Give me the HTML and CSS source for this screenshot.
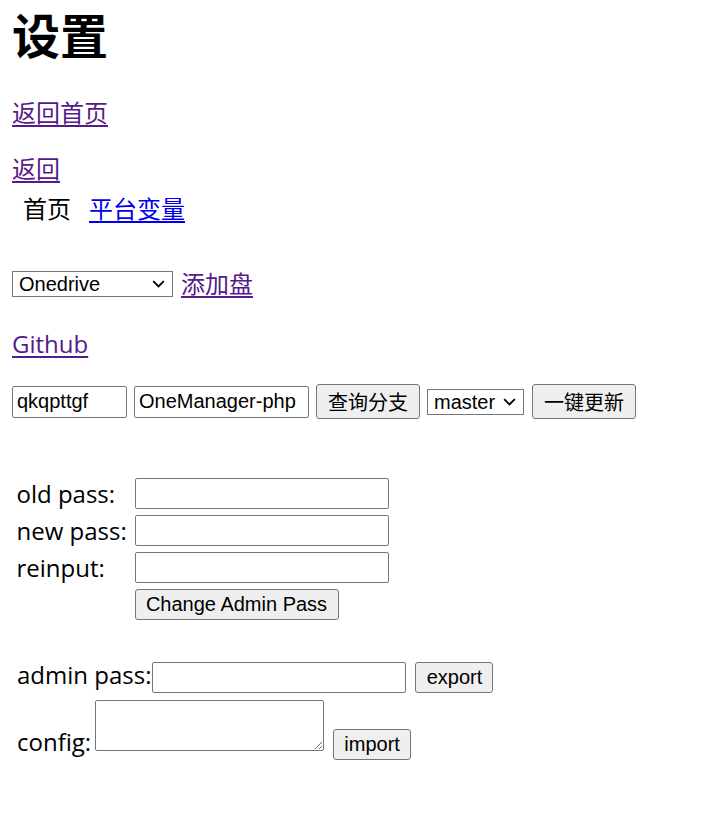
FILE: index.html
```html
<!DOCTYPE html>
<html lang="zh-CN">
<head>
<meta charset="utf-8">
<title>设置</title>
<link rel="stylesheet" href="styles.css">
</head>
<body>
<h1 class="title">设置</h1>
<div class="line back-home"><a class="visited" href="#">返回首页</a></div>
<div class="line back"><a class="visited" href="#">返回</a></div>
<div class="line tabs"><span class="tab">首页</span><a class="link" href="#">平台变量</a></div>
<div class="line drive-row"><select class="drive-select"><option>Onedrive</option></select><a class="visited add-drive" href="#">添加盘</a></div>
<div class="line github"><a class="visited" href="#">Github</a></div>
<div class="update-row"><input class="field owner" value="qkqpttgf"><input class="field repo" value="OneManager-php"><button class="btn tall">查询分支</button><select class="branch"><option>master</option></select><button class="btn tall">一键更新</button></div>
<table class="pass-table">
<tr><td class="label">old pass:</td><td><input class="field pass" type="password"></td></tr>
<tr><td class="label">new pass:</td><td><input class="field pass" type="password"></td></tr>
<tr><td class="label">reinput:</td><td><input class="field pass" type="password"></td></tr>
<tr><td class="label"></td><td><button class="btn change">Change Admin Pass</button></td></tr>
</table>
<div class="config">
<div class="config-row first"><span class="config-label">admin pass:</span><input class="field pass" type="password"><button class="btn small">export</button></div>
<div class="config-row second"><span class="config-label wide">config:</span><textarea class="config-area"></textarea><button class="btn small">import</button></div>
</div>
</body>
</html>
```
FILE: styles.css
```css
body {
  margin: 4px 12px 12px;
  font-family: "Open Sans", "Noto Sans CJK SC", sans-serif;
  font-size: 24px;
  line-height: 32px;
  color: #000;
  background: #fff;
}
a {
  text-decoration-thickness: 2px;
  text-underline-offset: 3px;
}
a.visited { color: #551a8b; }
a.link { color: #0000ee; }

.title {
  margin: 0;
  font-size: 48px;
  line-height: 64px;
  font-weight: bold;
}
.back-home { margin-top: 29px; }
.back { margin-top: 24px; }
.tabs {
  margin-top: 8px;
  display: flex;
  gap: 18px;
  padding-left: 11px;
}
.drive-row {
  margin-top: 43px;
  display: flex;
  align-items: center;
  gap: 8px;
}
.github { margin-top: 28px; }

input, select, button, textarea {
  font-family: "Liberation Sans", "Noto Sans CJK SC", sans-serif;
  font-size: 20px;
  color: #000;
  margin: 0;
  box-sizing: border-box;
}
.field {
  height: 31px;
  border: 1px solid #767676;
  border-radius: 2px;
  padding: 1px 4px;
  background: #fff;
}
select {
  -webkit-appearance: none;
  appearance: none;
  height: 26px;
  border: 1px solid #767676;
  border-radius: 0;
  padding: 0 24px 0 6px;
  background: #fff url("data:image/svg+xml,%3Csvg xmlns='http://www.w3.org/2000/svg' viewBox='0 0 13 8'%3E%3Cpath d='M1.2 1.2l5.3 5.3 5.3-5.3' fill='none' stroke='%23000' stroke-width='1.9'/%3E%3C/svg%3E") no-repeat right 7px center / 13px 8px;
}
.btn {
  height: 31px;
  border: 1px solid #767676;
  border-radius: 3px;
  background: #efefef;
  padding: 0 10px;
}
.btn.tall { height: 35px; padding: 0 11px; }

.update-row {
  margin-top: 24px;
  display: flex;
  align-items: center;
  gap: 7px;
}
.owner { width: 115px; height: 32px; }
.repo { width: 175px; height: 32px; }
.drive-select { width: 161px; }
.branch { width: 97px; }
.update-row .branch + .btn { margin-left: 1px; }

.pass-table {
  margin-top: 54.5px;
  border-spacing: 3px;
  line-height: 28px;
}
.pass-table td {
  padding: 1.5px;
  vertical-align: middle;
}
.pass-table .label { width: 112px; }
.pass-table .field { display: block; }
.pass { width: 254px; }
.change { width: 204px; display: block; }

.config {
  margin-top: 36.5px;
  padding-left: 5px;
  line-height: 28px;
}
.config-label { padding-right: 1px; }
.config-label.wide { padding-right: 4px; }
.config-row.first {
  display: flex;
  align-items: baseline;
}
.config-row .small { margin-left: 9px; width: 78px; }
.config-row.second { margin-top: 7px; }
.config-area {
  width: 229px;
  height: 51px;
  border: 1px solid #767676;
  border-radius: 2px;
  vertical-align: baseline;
  resize: both;
}
```
